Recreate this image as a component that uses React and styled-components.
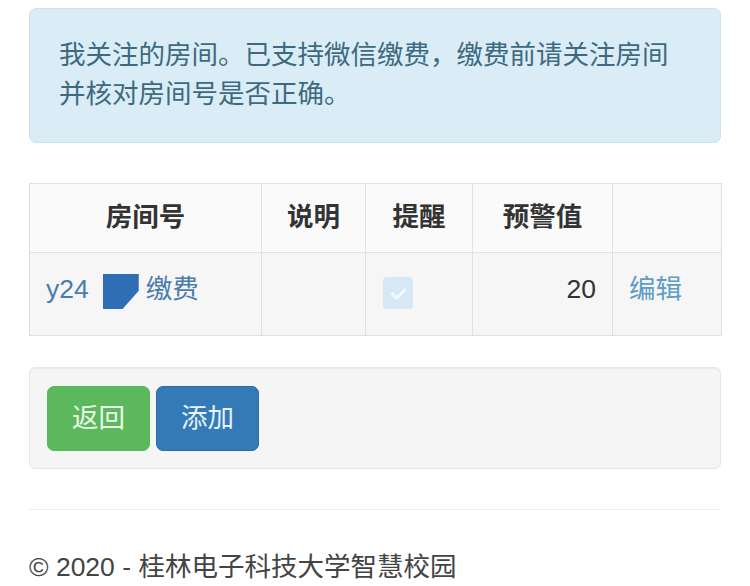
import React from "react";
import styled, { createGlobalStyle } from "styled-components";

const Global = createGlobalStyle`
  html, body { margin: 0; padding: 0; background: #fff; }
  body {
    font-family: "Liberation Sans", "Noto Sans CJK SC", sans-serif;
    font-size: 26.5px;
    line-height: 39px;
    color: #333;
  }
  * { box-sizing: border-box; }
`;

const Page = styled.div`
  padding: 8px 29px 0 29px;
  display: flex;
  flex-direction: column;
`;

const Alert = styled.div`
  background: #daedf7;
  border: 1px solid #c9e4f0;
  border-radius: 7px;
  color: #3d6a80;
  padding: 27px 29px 28px;
  margin-bottom: 40px;
`;

const Table = styled.table`
  width: 100%;
  border-collapse: collapse;
  table-layout: fixed;
  margin-bottom: 31px;
  border: 1px solid #e0e0e0;
`;

const Th = styled.th`
  width: ${(p) => p.$w}px;
  background: #fafafa;
  border: 1px solid #e0e0e0;
  padding: 14px 16px 15px;
  font-weight: bold;
  text-align: center;
  color: #333;
  height: 69px;
`;

const Td = styled.td`
  background: #f6f6f6;
  border: 1px solid #e0e0e0;
  padding: 17px 16px 0;
  height: 83px;
  vertical-align: top;
  text-align: ${(p) => p.$align || "left"};
  white-space: nowrap;
`;

const Link = styled.a`
  color: ${(p) => (p.$light ? "#5f9cc6" : "#4b7cae")};
  text-decoration: none;
`;

const Redacted = styled.span`
  display: inline-block;
  width: 36px;
  height: 35px;
  margin: 0 7px 0 14px;
  vertical-align: -11px;
  background: #2f6db5;
  clip-path: polygon(0 0, 100% 0, 100% 48%, 55% 100%, 0 100%);
  filter: blur(0.6px);
`;

const Check = styled.span`
  display: inline-block;
  width: 30px;
  height: 32px;
  margin: 7px 0 0 1px;
  border-radius: 4px;
  background: #d6e8f6;
  position: relative;
  &::after {
    content: "";
    position: absolute;
    left: 11px;
    top: 8px;
    width: 6px;
    height: 11px;
    border: solid rgba(255, 255, 255, 0.7);
    border-width: 0 3px 3px 0;
    transform: rotate(45deg);
  }
`;

const Well = styled.div`
  background: #f5f5f5;
  border: 1px solid #e6e6e6;
  border-radius: 6px;
  box-shadow: inset 0 1px 1px rgba(0, 0, 0, 0.05);
  padding: 18px 17px 17px;
  display: flex;
  gap: 6px;
  margin-bottom: 40px;
`;

const Button = styled.button`
  font: inherit;
  line-height: 39px;
  padding: 12px 24px;
  border-radius: 7px;
  border: 1px solid ${(p) => (p.$variant === "success" ? "#55b955" : "#2e6ca6")};
  background: ${(p) => (p.$variant === "success" ? "#5cb85c" : "#337ab7")};
  color: ${(p) => (p.$variant === "success" ? "#eef8ee" : "#e6f1fa")};
  cursor: pointer;
`;

const Rule = styled.hr`
  border: 0;
  border-top: 1px solid #eeeeee;
  margin: 0 0 38px;
  width: 100%;
`;

const Footer = styled.footer`
  color: #444;
`;

export default function App() {
  return (
    <>
      <Global />
      <Page>
        <Alert>
          我关注的房间。已支持微信缴费，缴费前请关注房间
          <br />
          并核对房间号是否正确。
        </Alert>
        <Table>
          <thead>
            <tr>
              <Th $w={232}>房间号</Th>
              <Th $w={104}>说明</Th>
              <Th $w={107}>提醒</Th>
              <Th $w={140}>预警值</Th>
              <Th $w={109}></Th>
            </tr>
          </thead>
          <tbody>
            <tr>
              <Td>
                <Link>y24</Link>
                <Redacted />
                <Link>缴费</Link>
              </Td>
              <Td></Td>
              <Td>
                <Check />
              </Td>
              <Td $align="right">20</Td>
              <Td>
                <Link $light>编辑</Link>
              </Td>
            </tr>
          </tbody>
        </Table>
        <Well>
          <Button $variant="success">返回</Button>
          <Button $variant="primary">添加</Button>
        </Well>
        <Rule />
        <Footer>© 2020 - 桂林电子科技大学智慧校园</Footer>
      </Page>
    </>
  );
}
